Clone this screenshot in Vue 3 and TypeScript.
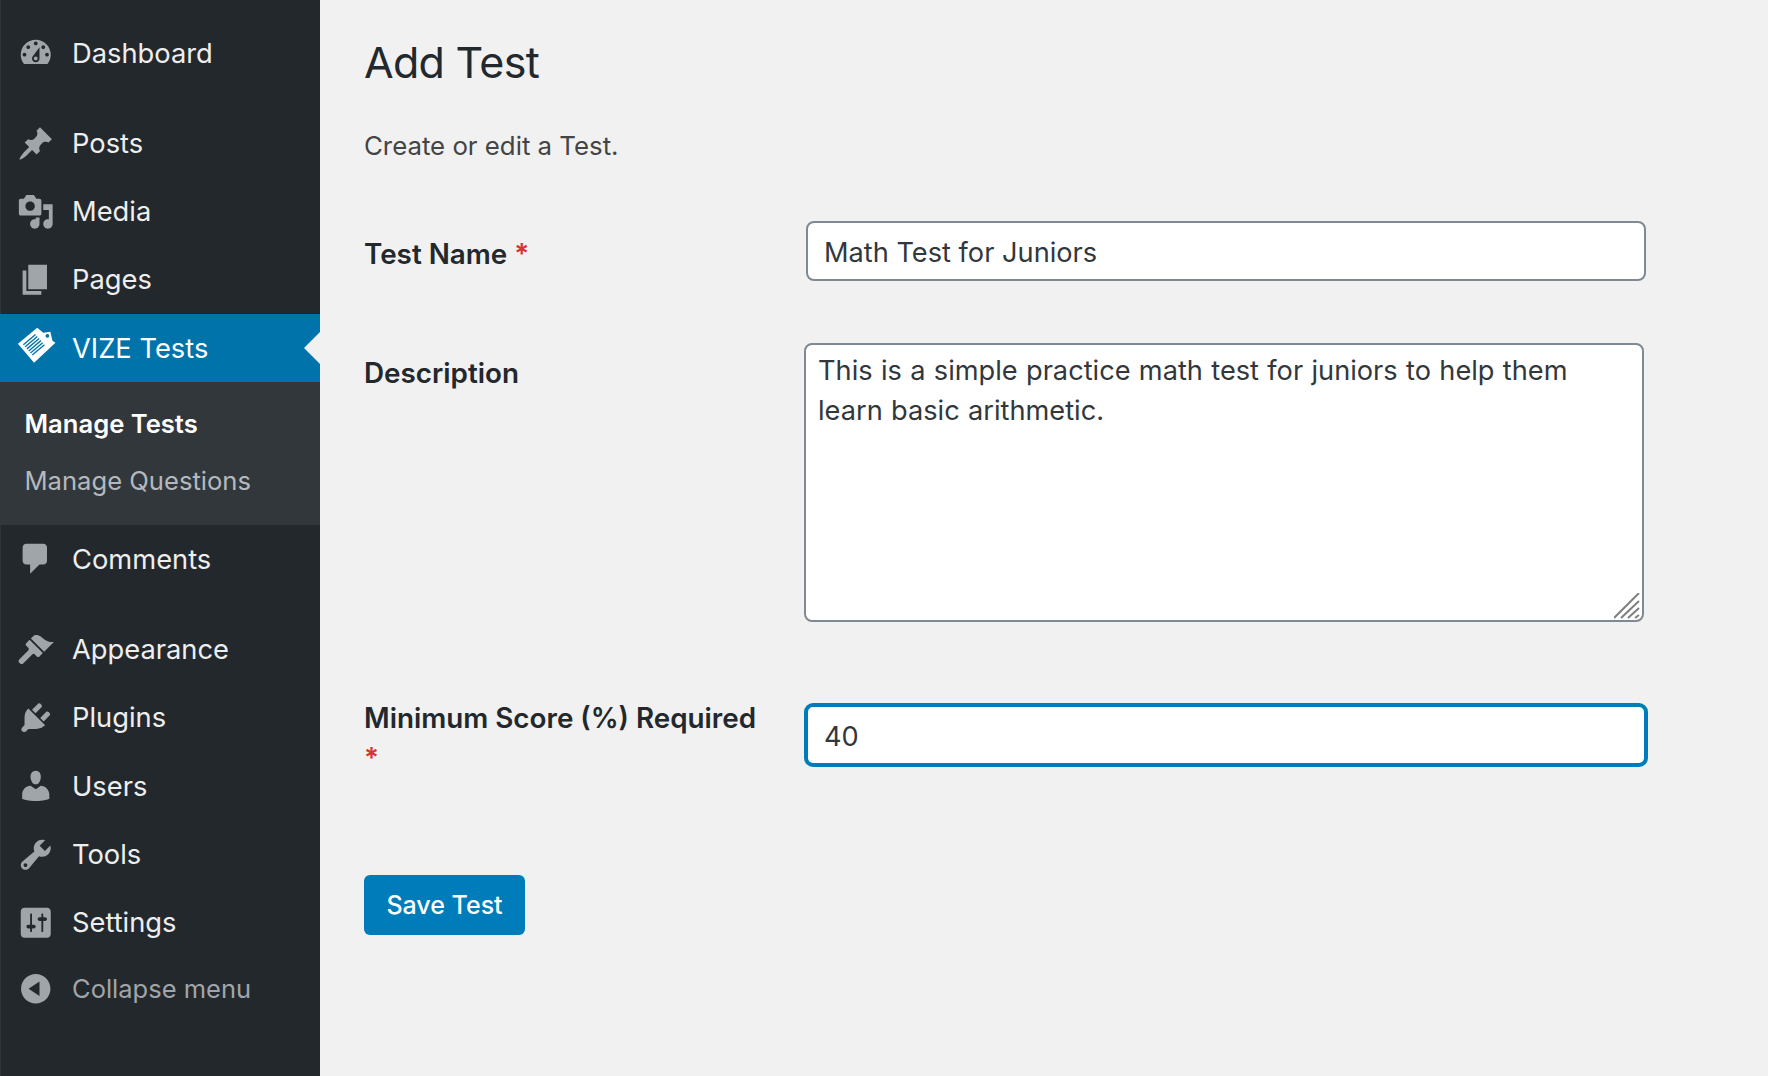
<template>
  <div class="page">
    <aside class="sidebar">
      <nav class="menu">
        <div v-for="group in menu" :key="group[0].label" class="group">
          <template v-for="item in group" :key="item.label">
            <a class="item" :class="{ current: item.current }">
              <svg class="icon" viewBox="0 0 20 20">
                <path v-if="item.icon" :d="item.icon" fill-rule="evenodd" />
                <g v-else>
                  <path d="M.5 7.9 10.8-.7 14 2 17.8 1.5 18.9 6.3 20.5 7.3 9.1 18Z" fill="#fff" />
                  <circle cx="16.2" cy="3.6" r="1" fill="#0073aa" />
                  <path d="M3.4 8.4 9.9 2.9M4.35 9.5 10.85 4M5.3 10.6 11.8 5.1M6.25 11.7 12.75 6.2M7.2 12.8 13.7 7.3M8.15 13.9 14.65 8.4" stroke="#0073aa" stroke-width=".7" fill="none" />
                </g>
              </svg>
              <span class="text">{{ item.label }}</span>
            </a>
            <div v-if="item.current" class="submenu">
              <a class="sub strong">Manage Tests</a>
              <a class="sub">Manage Questions</a>
            </div>
          </template>
        </div>
        <a class="item collapse">
          <svg class="icon" viewBox="0 0 20 20">
            <path :d="collapseIcon" fill-rule="evenodd" />
          </svg>
          <span>Collapse menu</span>
        </a>
      </nav>
    </aside>

    <main class="content">
      <h1>Add Test</h1>
      <p class="intro">Create or edit a Test.</p>

      <form class="form" @submit.prevent>
        <label class="label">Test Name <span class="req">*</span></label>
        <input class="field name" type="text" value="Math Test for Juniors" />

        <label class="label desc-label">Description</label>
        <div class="desc-wrap">
          <textarea class="field desc" :value="description"></textarea>
          <!-- drawn by hand, the native grip is much smaller -->
          <svg class="grip" viewBox="0 0 26 26">
            <path d="M0 25 25 0M7 25 25 8M14 25 25 15M21 25 25 22" />
          </svg>
        </div>

        <label class="label score-label">Minimum Score (%) Required <span class="req">*</span></label>
        <input class="field score" type="text" value="40" />
      </form>

      <button class="save" type="button">Save Test</button>
    </main>
  </div>
</template>

<script setup lang="ts">
type MenuItem = {
  label: string;
  icon?: string;
  current?: boolean;
};

const description =
  'This is a simple practice math test for juniors to help them learn basic arithmetic.';

const collapseIcon =
  'M10 2.16c4.33 0 7.84 3.51 7.84 7.84s-3.51 7.84-7.84 7.84S2.16 14.33 2.16 10 5.71 2.16 10 2.16zm2 11.72V6.12L6.18 9.97z';

const menu: MenuItem[][] = [
  [
    {
      label: 'Dashboard',
      icon: 'M3.76 16h12.48c1.1-1.37 1.76-3.11 1.76-5 0-4.42-3.58-8-8-8s-8 3.58-8 8c0 1.89.66 3.63 1.76 5zM10 4c.55 0 1 .45 1 1s-.45 1-1 1-1-.45-1-1 .45-1 1-1zM6 6c.55 0 1 .45 1 1s-.45 1-1 1-1-.45-1-1 .45-1 1-1zm8 0c.55 0 1 .45 1 1s-.45 1-1 1-1-.45-1-1 .45-1 1-1zm-5.37 5.55L12 7v6c0 1.1-.9 2-2 2s-2-.9-2-2c0-.57.24-1.08.63-1.45zM4 10c.55 0 1 .45 1 1s-.45 1-1 1-1-.45-1-1 .45-1 1-1zm12 0c.55 0 1 .45 1 1s-.45 1-1 1-1-.45-1-1 .45-1 1-1zm-5 3c0-.55-.45-1-1-1s-1 .45-1 1 .45 1 1 1 1-.45 1-1z',
    },
  ],
  [
    {
      label: 'Posts',
      icon: 'M10.44 3.02l1.82-1.82 6.36 6.35-1.83 1.82c-1.05-.68-2.48-.57-3.41.36l-.75.75c-.92.93-1.04 2.35-.35 3.41l-1.83 1.82-2.41-2.41-2.8 2.79c-.42.42-3.38 2.71-3.8 2.29s1.86-3.39 2.28-3.81l2.79-2.79L4.1 9.36l1.83-1.82c1.05.69 2.48.57 3.4-.36l.75-.75c.93-.92 1.05-2.35.36-3.41z',
    },
    {
      label: 'Media',
      icon: 'M13 11V4c0-.55-.45-1-1-1h-1.67L9 1H5L3.67 3H2c-.55 0-1 .45-1 1v7c0 .55.45 1 1 1h10c.55 0 1-.45 1-1zM7 4.5c1.38 0 2.5 1.12 2.5 2.5S8.38 9.5 7 9.5 4.5 8.38 4.5 7 5.62 4.5 7 4.5zM14 6h5v10.5c0 1.38-1.12 2.5-2.5 2.5S14 17.88 14 16.5s1.12-2.5 2.5-2.5c.17 0 .34.02.5.05V9h-3V6zm-4 8.05V13h2v3.5c0 1.38-1.12 2.5-2.5 2.5S7 17.88 7 16.5 8.12 14 9.5 14c.17 0 .34.02.5.05z',
    },
    { label: 'Pages', icon: 'M6 15V2h10v13H6zm-1 1h8v2H3V5h2v11z' },
    { label: 'VIZE Tests', current: true },
    {
      label: 'Comments',
      icon: 'M5 2h9c1.1 0 2 .9 2 2v7c0 1.1-.9 2-2 2h-2l-5 5v-5H5c-1.1 0-2-.9-2-2V4c0-1.1.9-2 2-2z',
    },
  ],
  [
    {
      label: 'Appearance',
      icon: 'M14.48 11.06L7.41 3.99l1.5-1.5c.5-.56 2.3-.47 3.51.32 1.21.8 1.43 1.28 2.91 2.1 1.18.64 2.45 1.26 4.45.85zM13.77 11.77L6.7 4.7 4.93 6.47c-.39.39-.39 1.02 0 1.41l1.06 1.06c.39.39.39 1.03 0 1.42L1.3 15.05a1.5 1.5 0 0 0 2.12 2.12L8.11 12.48c.39-.39 1.03-.39 1.42 0l1.06 1.06c.39.39 1.02.39 1.41 0z',
    },
    {
      label: 'Plugins',
      icon: 'M13.11 4.36L9.87 7.6 8 5.73l3.24-3.24c.35-.34 1.05-.2 1.56.32.52.51.66 1.21.31 1.55zm-8 1.77l.91-1.12 9.01 9.01-1.19.84c-.71.71-2.63 1.16-3.82 1.16H6.14L4.9 17.26c-.59.59-1.54.59-2.12 0-.59-.58-.59-1.53 0-2.12l1.24-1.24v-3.88c0-1.13.4-3.19 1.09-3.89zm7.26 3.97l3.24-3.24c.34-.35 1.04-.21 1.55.31.52.51.66 1.21.31 1.55l-3.24 3.25z',
    },
    {
      label: 'Users',
      icon: 'M10 9.25c-2.27 0-2.73-3.44-2.73-3.44C7 4.02 7.82 2 9.97 2c2.16 0 2.98 2.02 2.71 3.81 0 0-.41 3.44-2.68 3.44zm0 2.57L12.72 10c2.39 0 4.52 2.33 4.52 4.53v2.49s-3.65 1.13-7.24 1.13c-3.65 0-7.24-1.13-7.24-1.13v-2.49c0-2.25 1.94-4.48 4.47-4.48z',
    },
    {
      label: 'Tools',
      icon: 'M16.68 9.77c-1.34 1.34-3.3 1.67-4.95.99l-5.41 6.52c-.99.99-2.59.99-3.58 0s-.99-2.59 0-3.57l6.52-5.42c-.68-1.65-.35-3.61.99-4.95 1.28-1.28 3.12-1.62 4.72-1.06l-2.89 2.89 2.82 2.82 2.86-2.87c.53 1.58.18 3.39-1.08 4.65zM3.81 16.21c.4.39 1.04.39 1.43 0 .4-.4.4-1.04 0-1.43-.39-.4-1.03-.4-1.43 0-.39.39-.39 1.03 0 1.43z',
    },
    {
      label: 'Settings',
      icon: 'M18 16V4c0-1.1-.9-2-2-2H4c-1.1 0-2 .9-2 2v12c0 1.1.9 2 2 2h12c1.1 0 2-.9 2-2zM8 11h1c.55 0 1 .45 1 1s-.45 1-1 1H8v1.5c0 .28-.22.5-.5.5s-.5-.22-.5-.5V13H6c-.55 0-1-.45-1-1s.45-1 1-1h1V5.5c0-.28.22-.5.5-.5s.5.22.5.5V11zm5-2h-1c-.55 0-1-.45-1-1s.45-1 1-1h1V5.5c0-.28.22-.5.5-.5s.5.22.5.5V7h1c.55 0 1 .45 1 1s-.45 1-1 1h-1v5.5c0 .28-.22.5-.5.5s-.5-.22-.5-.5V9z',
    },
  ],
];
</script>

<style scoped>
.page {
  display: flex;
  height: 1076px;
  overflow: hidden;
  background: #f1f1f1;
  font-family: Inter, "Noto Sans", sans-serif;
  color: #23282d;
}

.sidebar {
  flex: 0 0 320px;
  background: #23282d;
  box-shadow: inset 1px 0 0 #2f3439;
}

.menu {
  padding-top: 19px;
}

.group {
  margin-bottom: 22px;
}

.group:nth-child(3) {
  margin-bottom: 0;
}

.group:nth-child(3) .item {
  height: 68.4px;
}

.item {
  position: relative;
  display: flex;
  align-items: center;
  height: 68.2px;
  padding-left: 17px;
  font-size: 27.3px;
  color: #eee;
}

.icon {
  flex: 0 0 37.5px;
  width: 37.5px;
  height: 37.5px;
  margin-right: 17.5px;
  fill: #a0a5aa;
  overflow: visible;
}

.item.current {
  background: #0073aa;
  color: #fff;
}

.item.current .text {
  padding-top: 2px;
}

.item.current .icon {
  fill: #fff;
}

.item.current::after {
  content: "";
  position: absolute;
  top: 50%;
  right: 0;
  margin-top: -16px;
  border: 16px solid transparent;
  border-left: 0;
  border-right-color: #f1f1f1;
}

.submenu {
  display: flex;
  flex-direction: column;
  height: 143px;
  padding-top: 13px;
  background: #32373c;
  box-sizing: border-box;
}

.sub {
  height: 57px;
  line-height: 57px;
  padding-left: 24.5px;
  font-size: 25.6px;
  color: #b4b9be;
}

.sub.strong {
  font-weight: 600;
  color: #fff;
}

.item.collapse {
  height: 62.5px;
  color: #a0a5aa;
  font-size: 25.5px;
}

.content {
  flex: 1;
  padding-left: 44px;
}

h1 {
  margin: 0;
  padding-top: 33px;
  font-size: 43px;
  font-weight: 400;
  letter-spacing: -0.7px;
  line-height: 58px;
}

.intro {
  margin: 39px 0 0;
  font-size: 25.8px;
  line-height: 32px;
  color: #444;
}

.form {
  display: grid;
  grid-template-columns: 440px 844px;
  margin-top: 59px;
  align-items: start;
}

.label {
  font-size: 27.8px;
  font-weight: 600;
  line-height: 37px;
  padding-top: 15px;
}

.req {
  color: #dc3232;
}

.field {
  box-sizing: border-box;
  display: block;
  background: #fff;
  border: 2px solid #7e8993;
  border-radius: 8px;
  font-family: inherit;
  font-size: 27.2px;
  color: #32373c;
  outline: none;
}

.name {
  width: 840px;
  height: 60px;
  margin-left: 2px;
  padding: 3px 16px 0;
}

.desc-label {
  margin-top: 62px;
  padding-top: 12px;
}

.desc-wrap {
  position: relative;
  width: 840px;
  height: 279px;
  margin-top: 62px;
}

.desc {
  width: 100%;
  height: 100%;
  padding: 6px 30px 6px 12px;
  line-height: 39.5px;
  word-spacing: 0.7px;
  resize: none;
}

.grip {
  position: absolute;
  right: 4px;
  bottom: 3px;
  width: 26px;
  height: 26px;
  fill: none;
  stroke: #7f7f7f;
  stroke-width: 2;
}

.score-label {
  width: 400px;
  margin-top: 75.5px;
  padding-top: 0;
  line-height: 40px;
}

.score {
  width: 844px;
  height: 64px;
  margin-top: 81px;
  padding: 3px 16px 0;
  border: 4px solid #007cba;
  border-radius: 9px;
}

.save {
  display: block;
  width: 161px;
  height: 60px;
  margin-top: 97.5px;
  padding: 0;
  border: 0;
  border-radius: 6px;
  background: #007cba;
  color: #fff;
  font-family: inherit;
  font-size: 25px;
  font-weight: 500;
}
</style>
